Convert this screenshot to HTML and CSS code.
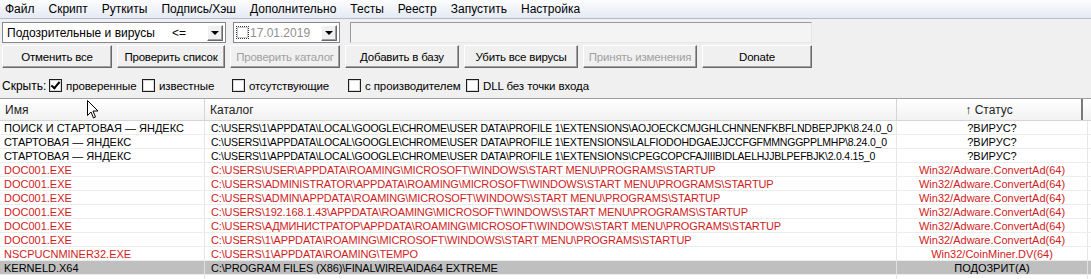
FILE: index.html
```html
<!DOCTYPE html>
<html lang="ru">
<head>
  <meta charset="UTF-8" />
  <title>AVZ</title>
  <link rel="stylesheet" href="styles.css">
</head>
<body>
  <!-- Menu -->
  <nav class="menu">
    <span>Файл</span>
    <span>Скрипт</span>
    <span>Руткиты</span>
    <span>Подпись/Хэш</span>
    <span>Дополнительно</span>
    <span>Тесты</span>
    <span>Реестр</span>
    <span>Запустить</span>
    <span>Настройка</span>
  </nav>

  <!-- Filters row -->
  <div class="toolbar">
    <div class="combo">
      <span class="combo-text">Подозрительные и вирусы</span>
      <span class="combo-op">&lt;=</span>
      <span class="drop"><span class="tri"></span></span>
    </div>
    <div class="date">
      <span class="date-check"></span>
      <span class="date-text">17.01.2019</span>
      <span class="drop"><span class="tri"></span></span>
    </div>
    <div class="search"></div>
  </div>

  <!-- Buttons row -->
  <div class="buttons">
    <button>Отменить все</button>
    <button>Проверить список</button>
    <button disabled>Проверить каталог</button>
    <button>Добавить в базу</button>
    <button>Убить все вирусы</button>
    <button disabled>Принять изменения</button>
    <button>Donate</button>
  </div>

  <!-- Hide options -->
  <div class="hide">
    <span class="hide-label">Скрыть:</span>
    <label class="opt w1"><span class="box checked"></span>проверенные</label>
    <label class="opt w2"><span class="box"></span>известные</label>
    <label class="opt w3"><span class="box"></span>отсутствующие</label>
    <label class="opt w4"><span class="box"></span>с производителем</label>
    <label class="opt"><span class="box"></span>DLL без точки входа</label>
  </div>

  <!-- Table -->
  <div class="table">
    <div class="head">
      <div class="th">Имя</div>
      <div class="th">Каталог</div>
      <div class="th center">&#8593; Статус</div>
      <div class="th-rest"></div>
    </div>
    <div class="row ext">
      <div>ПОИСК И СТАРТОВАЯ — ЯНДЕКС</div>
      <div>C:\USERS\1\APPDATA\LOCAL\GOOGLE\CHROME\USER DATA\PROFILE 1\EXTENSIONS\AOJOECKCMJGHLCHNNENFKBFLNDBEPJPK\8.24.0_0</div>
      <div class="center">?ВИРУС?</div>
    </div>
    <div class="row ext">
      <div>СТАРТОВАЯ — ЯНДЕКС</div>
      <div>C:\USERS\1\APPDATA\LOCAL\GOOGLE\CHROME\USER DATA\PROFILE 1\EXTENSIONS\LALFIODOHDGAEJJCCFGFMMNGGPPLMHP\8.24.0_0</div>
      <div class="center">?ВИРУС?</div>
    </div>
    <div class="row ext">
      <div>СТАРТОВАЯ — ЯНДЕКС</div>
      <div>C:\USERS\1\APPDATA\LOCAL\GOOGLE\CHROME\USER DATA\PROFILE 1\EXTENSIONS\CPEGCOPCFAJIIIBIDLAELHJJBLPEFBJK\2.0.4.15_0</div>
      <div class="center">?ВИРУС?</div>
    </div>
    <div class="row red">
      <div>DOC001.EXE</div>
      <div>C:\USERS\USER\APPDATA\ROAMING\MICROSOFT\WINDOWS\START MENU\PROGRAMS\STARTUP</div>
      <div class="center">Win32/Adware.ConvertAd(64)</div>
    </div>
    <div class="row red">
      <div>DOC001.EXE</div>
      <div>C:\USERS\ADMINISTRATOR\APPDATA\ROAMING\MICROSOFT\WINDOWS\START MENU\PROGRAMS\STARTUP</div>
      <div class="center">Win32/Adware.ConvertAd(64)</div>
    </div>
    <div class="row red">
      <div>DOC001.EXE</div>
      <div>C:\USERS\ADMIN\APPDATA\ROAMING\MICROSOFT\WINDOWS\START MENU\PROGRAMS\STARTUP</div>
      <div class="center">Win32/Adware.ConvertAd(64)</div>
    </div>
    <div class="row red">
      <div>DOC001.EXE</div>
      <div>C:\USERS\192.168.1.43\APPDATA\ROAMING\MICROSOFT\WINDOWS\START MENU\PROGRAMS\STARTUP</div>
      <div class="center">Win32/Adware.ConvertAd(64)</div>
    </div>
    <div class="row red">
      <div>DOC001.EXE</div>
      <div>C:\USERS\АДМИНИСТРАТОР\APPDATA\ROAMING\MICROSOFT\WINDOWS\START MENU\PROGRAMS\STARTUP</div>
      <div class="center">Win32/Adware.ConvertAd(64)</div>
    </div>
    <div class="row red">
      <div>DOC001.EXE</div>
      <div>C:\USERS\1\APPDATA\ROAMING\MICROSOFT\WINDOWS\START MENU\PROGRAMS\STARTUP</div>
      <div class="center">Win32/Adware.ConvertAd(64)</div>
    </div>
    <div class="row red">
      <div>NSCPUCNMINER32.EXE</div>
      <div>C:\USERS\1\APPDATA\ROAMING\TEMPO</div>
      <div class="center">Win32/CoinMiner.DV(64)</div>
    </div>
    <div class="row selected">
      <div>KERNELD.X64</div>
      <div>C:\PROGRAM FILES (X86)\FINALWIRE\AIDA64 EXTREME</div>
      <div class="center">ПОДОЗРИТ(А)</div>
    </div>
    <div class="row">
      <div></div>
      <div></div>
      <div></div>
    </div>

    <!-- mouse pointer over the header -->
    <svg class="cursor" width="12" height="19" viewBox="0 0 12 19">
      <path d="M0.5 0.5 L0.5 15.5 L4 12 L6.5 18 L8.5 17 L6 11 L11 11 Z" fill="#fff" stroke="#000" stroke-width="1"/>
    </svg>
  </div>
</body>
</html>
```

FILE: styles.css
```css
/* Base */
* {
  margin: 0;
  padding: 0;
  box-sizing: border-box;
}
body {
  width: 1091px;
  height: 279px;
  overflow: hidden;
  background-color: #f0f0f0;
  font-family: "Liberation Sans", Arial, sans-serif;
  font-size: 12px;
  color: #000;
}

/* Menu bar */
.menu {
  height: 19px;
  display: flex;
  align-items: center;
  padding-left: 5px;
  background: linear-gradient(#fdfdfe, #e4eaf4);
  border-bottom: 1px solid #b6bccc;
}
.menu span {
  margin-right: 14px;
  line-height: 18px;
}

/* Filter row */
.toolbar {
  display: flex;
  align-items: center;
  padding: 3px 0 0 2px;
  height: 24px;
}
.combo {
  width: 224px;
  height: 21px;
  background-color: #fff;
  border: 1px solid #828790;
  display: flex;
  align-items: center;
  padding-left: 4px;
}
.combo-text {
  width: 168px;
}
.combo-op {
  width: 36px;
}
.drop {
  width: 16px;
  height: 16px;
  margin-left: auto;
  margin-right: 2px;
  background-color: #f0f0f0;
  border: 1px solid;
  border-color: #fff #696969 #696969 #fff;
  box-shadow: inset -1px -1px 0 #a0a0a0;
  display: flex;
  align-items: center;
  justify-content: center;
}
.tri {
  width: 0;
  height: 0;
  border-left: 4px solid transparent;
  border-right: 4px solid transparent;
  border-top: 4px solid #000;
  margin-top: 1px;
}
.date {
  width: 107px;
  height: 21px;
  margin-left: 7px;
  background-color: #fff;
  border: 1px solid #828790;
  display: flex;
  align-items: center;
  padding-left: 2px;
}
.date-check {
  width: 13px;
  height: 13px;
  border: 1px dotted #333;
  background-color: #fff;
  box-shadow: inset 0 0 0 1px #c8c8c8;
  margin-right: 1px;
}
.date-text {
  color: #909090;
}
.search {
  width: 462px;
  height: 21px;
  margin-left: 10px;
  background-color: #f4f4f4;
  border: 1px solid;
  border-color: #9a9a9a #e6e6e6 #e6e6e6 #9a9a9a;
}

/* Buttons row */
.buttons {
  display: flex;
  gap: 5px;
  padding: 2px 0 0 2px;
  height: 25px;
}
.buttons button {
  width: 110px;
  height: 23px;
  font-family: "Liberation Sans", Arial, sans-serif;
  font-size: 11.5px;
  letter-spacing: -0.2px;
  white-space: nowrap;
  color: #000;
  background-color: #f0f0f0;
  border: 1px solid;
  border-color: #fff #696969 #696969 #fff;
  box-shadow: inset -1px -1px 0 #a0a0a0;
}
.buttons button:nth-child(2) {
  width: 108px;
}
.buttons button:nth-child(4),
.buttons button:nth-child(5),
.buttons button:nth-child(6) {
  width: 114px;
}
.buttons button:disabled {
  color: #a0a0a0;
}

/* Hide options */
.hide {
  display: flex;
  align-items: center;
  height: 30px;
  padding-left: 2px;
  padding-top: 5px;
  white-space: nowrap;
}
.hide-label {
  width: 47px;
}
.opt {
  display: flex;
  align-items: center;
  font-size: 11.5px;
  letter-spacing: -0.1px;
}
.opt.w1 { width: 93px; }
.opt.w2 { width: 90px; }
.opt.w3 { width: 116px; }
.opt.w4 { width: 118px; }
.box {
  flex: none;
  width: 13px;
  height: 13px;
  background-color: #fff;
  border: 1px solid #1c1c1c;
  box-shadow: inset 0 0 0 1px #d8d8d8;
  margin-right: 4px;
  position: relative;
}
.box.checked::after {
  content: "";
  position: absolute;
  left: 3px;
  top: 0px;
  width: 3px;
  height: 7px;
  border: solid #000;
  border-width: 0 2px 2px 0;
  transform: rotate(40deg);
}

/* Table */
.table {
  position: relative;
  background-color: #fff;
  border-top: 1px solid #a0a0a0;
  font-size: 11px;
}
.head {
  display: grid;
  grid-template-columns: 205px 692px 186px 1fr;
  height: 22px;
  background: linear-gradient(#ffffff, #f2f2f2);
  border-bottom: 1px solid #d5d5d5;
}
.th {
  border-right: 1px solid #d5d5d5;
  padding: 1px 0 0 5px;
  line-height: 20px;
  font-size: 12px;
  color: #222;
}
.head .th:nth-child(3) {
  border-right: 2px solid #7a7a7a;
}
.row {
  display: grid;
  grid-template-columns: 205px 692px 191px 1fr;
  height: 14px;
  line-height: 14px;
  border-bottom: 1px solid #ececec;
}
.row > div {
  padding-left: 4px;
  white-space: nowrap;
  overflow: hidden;
  border-right: 1px solid #e6e6e6;
}
.row > div:nth-child(2) {
  padding-left: 6px;
  letter-spacing: -0.15px;
}
.row.ext > div:nth-child(2) {
  font-size: 10.5px;
  letter-spacing: -0.22px;
}
.center {
  text-align: center;
  padding-left: 0 !important;
}
.red {
  color: #d01c1c;
}
.selected {
  background-color: #bfbfbf;
}
.selected > div {
  border-right-color: #e0e0e0;
}
.cursor {
  position: absolute;
  left: 87px;
  top: 1px;
}
```
